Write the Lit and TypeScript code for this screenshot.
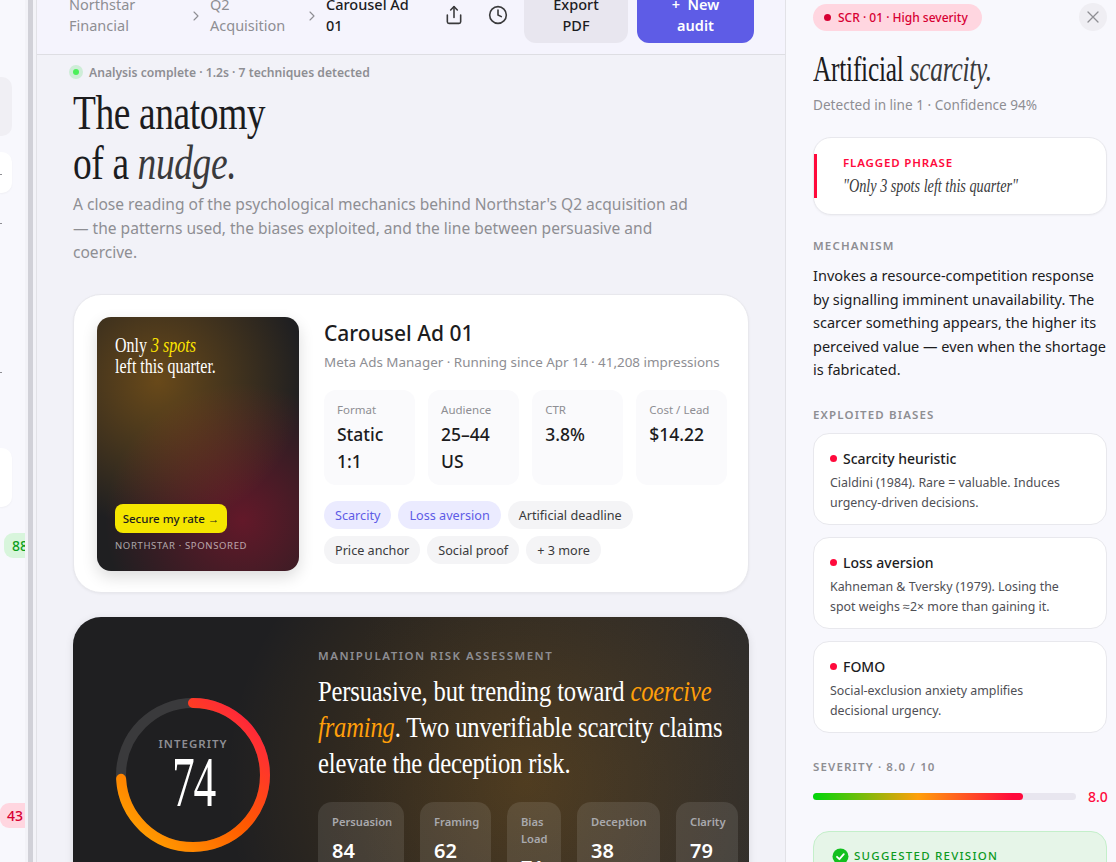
import { LitElement, html, css } from "lit";
import { customElement } from "lit/decorators.js";

const share = html`<svg class="ico" width="20" height="20" viewBox="0 0 24 24" fill="none" stroke="currentColor" stroke-width="1.9" stroke-linecap="round" stroke-linejoin="round"><path d="M4 12v8a2 2 0 0 0 2 2h12a2 2 0 0 0 2-2v-8"/><polyline points="16 6 12 2 8 6"/><line x1="12" y1="2" x2="12" y2="15"/></svg>`;
const clock = html`<svg class="ico" width="20" height="20" viewBox="0 0 24 24" fill="none" stroke="currentColor" stroke-width="1.9" stroke-linecap="round" stroke-linejoin="round"><circle cx="12" cy="12" r="10"/><polyline points="12 6 12 12 16 14"/></svg>`;

const stats = [
  ["Format", "Static 1:1"],
  ["Audience", "25–44 US"],
  ["CTR", "3.8%"],
  ["Cost / Lead", "$14.22"],
];
const scores = [
  ["Persuasion", "84"],
  ["Framing", "62"],
  ["Bias Load", "71"],
  ["Deception", "38"],
  ["Clarity", "79"],
];
const biases = [
  ["Scarcity heuristic", "Cialdini (1984). Rare = valuable. Induces urgency-driven decisions."],
  ["Loss aversion", "Kahneman & Tversky (1979). Losing the spot weighs ≈2× more than gaining it."],
  ["FOMO", "Social-exclusion anxiety amplifies decisional urgency."],
];

@customElement("app-root")
export class AppRoot extends LitElement {
  static styles = css`
    :host { display: block; width: 1116px; height: 862px; overflow: hidden; font-family: "Noto Sans", sans-serif; color: #1c1c1e; background: #f8f8fd; }
    * { box-sizing: border-box; }
    .shell { display: grid; grid-template-columns: 25px 11px 750px 330px; height: 862px; overflow: hidden; }

    .side { overflow: hidden; background: #f8f8fd; display: flex; flex-direction: column; align-items: flex-start; }
    .slab { width: 12px; height: 59px; border-radius: 0 10px 10px 0; flex: none; }
    .s1 { margin-top: 77px; background: #f0eff4; }
    .s2 { margin-top: 16px; height: 41px; background: #fff; box-shadow: 0 1px 2px rgba(0,0,0,.04); padding-top: 22px; }
    .s3 { margin-top: 75px; background: #fff; box-shadow: 0 1px 2px rgba(0,0,0,.04); }
    .mark { width: 2px; height: 1px; background: #8e8e93; flex: none; display: block; }
    .m1 { margin-top: 30px; }
    .m2 { margin-top: 148px; }
    .pill { flex: none; margin-left: 4px; width: 38px; height: 25px; border-radius: 9px; font-size: 14px; font-weight: 500; line-height: 25px; padding-left: 8px; }
    .p1 { margin-top: 26px; background: #d8f5dc; color: #0ca01c; }
    .p2 { margin-top: 245px; margin-left: 0; background: #ffd6e0; color: #d70033; padding-left: 7px; }

    .rail { background: #f3f3f8; padding-left: 3px; }
    .rail div { width: 5px; height: 100%; background: #d1d1d8; }

    .main { background: #f2f2f8; border-left: 1px solid #e2e2e7; border-right: 1px solid #e2e2e7; overflow: hidden; }
    .top { margin-top: -22px; height: 77px; padding: 11px 31px 11px 32px; display: flex; align-items: center; background: #f5f4fd; border-bottom: 1px solid #dedee3; font-size: 14.5px; line-height: 21px; }
    .crumb { color: #8e8e93; width: 123px; flex: none; margin-top: -2px; }
    .crumb.b { width: 98px; }
    .crumb.c { color: #1c1c1e; font-weight: 500; width: 95px; }
    .chev { width: 14px; color: #8e8e93; margin-right: 4px; flex: none; display: flex; }
    .ico { color: #3a3a3c; flex: none; display: block; }
    .i1 { margin-left: 23px; margin-top: -2px; }
    .i2 { margin-left: 24px; margin-top: -2px; }
    .btn { flex: none; height: 54px; border-radius: 12px; display: flex; align-items: center; justify-content: center; text-align: center; font-size: 14.5px; line-height: 21px; font-weight: 500; }
    .export { width: 104px; margin-left: 16px; background: #e8e6ef; padding: 0 30px 2px; }
    .new { width: 117px; margin-left: 9px; background: #5e5ce6; color: #fff; font-weight: 600; padding: 0 28px 2px; }

    .body { padding: 9px 36px 0; }
    .status { display: flex; align-items: center; gap: 7px; font-size: 12.15px; font-weight: 600; color: #8e8e93; height: 16px; margin-left: -5px; }
    .dot { width: 6px; height: 6px; margin: 0 3px 0 5px; border-radius: 50%; background: #4bf05a; box-shadow: 0 0 0 4px rgba(76,217,100,.22); flex: none; }
    .serif { font-family: "Liberation Serif", serif; transform-origin: left top; font-weight: 400; }
    h1 { margin: 8px 0 0; font-size: 48px; line-height: 50px; width: 800px; transform: scaleX(.78); letter-spacing: -.5px; height: 100px; }
    h1 em { color: #3a3a3c; }
    .lede { margin: 4px 0 0; font-size: 15.55px; line-height: 24px; color: #8e8e93; width: 625px; }

    .ad { margin-top: 30px; height: 299px; background: #fff; border: 1px solid #e8e8ed; border-radius: 28px; padding: 22px 22px 21px 23px; display: flex; gap: 25px; box-shadow: 0 1px 3px rgba(0,0,0,.05); }
    .creative { flex: none; width: 202px; height: 254px; border-radius: 14px; padding: 18px 18px 0; display: flex; flex-direction: column; background: radial-gradient(circle at 30% 25%, rgba(255,159,10,.33), transparent 62%), radial-gradient(circle at 72% 80%, rgba(255,10,60,.3), transparent 55%), #1f1f21; box-shadow: 0 6px 16px rgba(0,0,0,.14); color: #fff; }
    .copy { font-size: 20px; line-height: 21px; height: 42px; width: 240px; transform: scaleX(.8); flex: none; }
    .copy em { color: #ffe600; }
    .cta { margin-top: 127px; width: 112px; height: 29px; border-radius: 8px; background: #f5e600; color: #1c1c1e; font-size: 11.5px; font-weight: 500; display: flex; align-items: center; justify-content: center; flex: none; }
    .spons { margin-top: 6px; font-size: 9.5px; letter-spacing: .65px; color: rgba(255,255,255,.62); white-space: nowrap; }
    .info { flex: 1; min-width: 0; }
    .info h2 { margin: 2px 0 0; font-size: 21px; line-height: 28px; font-weight: 500; }
    .meta { margin-top: 5px; font-size: 13.43px; line-height: 20px; color: #8e8e93; white-space: nowrap; }
    .stats { margin-top: 18px; display: grid; grid-template-columns: repeat(4, 90.7px); gap: 13.4px; }
    .stat { height: 95px; border-radius: 12px; background: #fafafc; padding: 11px 13px; }
    .stat small { display: block; font-size: 11.5px; line-height: 17px; color: #8e8e93; }
    .stat b { display: block; font-size: 17.5px; line-height: 27px; font-weight: 500; margin-top: 3px; }
    .chips { margin-top: 16px; display: flex; flex-wrap: wrap; gap: 7px; width: 100%; }
    .chip { height: 28px; padding: 0 11px; border-radius: 14px; background: #f4f4f6; color: #3a3a3c; font-size: 12.65px; line-height: 28px; white-space: nowrap; }
    .chip.on { background: #ebebff; color: #5e5ce6; }

    .risk { margin-top: 24px; height: 316px; border-radius: 28px; padding: 31px 0 0 40px; display: flex; gap: 45px; color: #fff; background: radial-gradient(circle 300px at 67% 52%, rgba(255,159,10,.2), transparent), linear-gradient(100deg, #1f1f21 40%, #2b2b2d); box-shadow: 0 2px 8px rgba(0,0,0,.1); }
    .ring { flex: none; width: 160px; height: 160px; margin-top: 47px; position: relative; display: flex; flex-direction: column; align-items: center; }
    .ring svg { position: absolute; inset: 0; }
    .ring small { position: relative; margin-top: 41px; font-size: 11.5px; line-height: 16px; font-weight: 600; letter-spacing: 1px; color: #8e8e93; }
    .ring .num { position: relative; font-size: 71px; line-height: 58px; margin-top: 1px; transform: scaleX(.64); transform-origin: center top; letter-spacing: -2px; }
    .rtext { flex: none; width: 420px; }
    .eyebrow { font-size: 11.5px; line-height: 16px; font-weight: 600; letter-spacing: 1.5px; color: #8e8e93; white-space: nowrap; }
    .rh { margin-top: 9px; font-size: 30px; line-height: 36px; width: 520px; height: 108px; transform: scaleX(.82); letter-spacing: -.2px; white-space: nowrap; }
    .rh em { color: #ff9f0a; }
    .scores { margin-top: 21px; display: grid; grid-template-columns: 86px 71px 54px 83px 62px; gap: 16px; width: 420px; }
    .score { border-radius: 14px; background: rgba(255,255,255,.1); padding: 11px 0 12px 14px; }
    .score small { display: block; font-size: 11.2px; line-height: 17px; font-weight: 600; color: #a9a9ad; }
    .score b { display: block; margin-top: 7px; font-size: 20px; line-height: 27px; font-weight: 600; }
    .score:nth-child(3) small { width: 26px; }

    .panel { padding: 4px 9px 0 27px; overflow: hidden; background: #f8f8fd; }
    .phead { display: flex; justify-content: space-between; align-items: flex-start; }
    .sev { height: 27px; width: 169px; border-radius: 14px; background: #ffd6e0; color: #d70033; font-size: 12px; font-weight: 500; display: flex; align-items: center; padding-left: 11px; gap: 7px; white-space: nowrap; }
    .sev i { width: 7px; height: 7px; border-radius: 50%; background: #d70033; flex: none; }
    .close { width: 28px; height: 28px; margin-top: -1px; border-radius: 50%; background: #efeef3; display: flex; align-items: center; justify-content: center; color: #8e8e93; }
    .ptitle { margin-top: 17px; font-size: 35px; line-height: 44px; height: 44px; width: 400px; transform: scaleX(.723); letter-spacing: -.3px; white-space: nowrap; }
    .ptitle em { color: #3a3a3c; }
    .psub { margin-top: 3px; font-size: 13.6px; line-height: 20px; color: #8e8e93; white-space: nowrap; }
    .flag { margin-top: 22px; height: 78px; border-radius: 18px; background: #fff; border: 1px solid #e8e8ed; box-shadow: 0 1px 2px rgba(0,0,0,.04); position: relative; padding: 16px 0 0 29px; }
    .flag::before { content: ""; position: absolute; left: 0; top: 16px; width: 3px; height: 44px; background: #ff0a3c; }
    .flag small { display: block; font-size: 11.5px; line-height: 17px; font-weight: 600; letter-spacing: .85px; color: #ff0a3c; }
    .flag q { display: block; quotes: none; margin-top: 4px; font-size: 18px; line-height: 22px; width: 300px; transform: scaleX(.79); font-style: italic; color: #3a3a3c; white-space: nowrap; }
    .lab { font-size: 11.5px; line-height: 16px; font-weight: 600; letter-spacing: 1.15px; color: #8e8e93; white-space: nowrap; }
    .l1 { margin-top: 23px; }
    .mech { margin: 10px -3px 0 0; font-size: 14.5px; line-height: 23.5px; color: #1c1c1e; }
    .l2 { margin-top: 25px; }
    .bias { margin-top: 10px; height: 92px; border: 1px solid #e8e8ed; border-radius: 16px; background: #fff; padding: 14px 14px 0 16px; }
    .bias + .bias { margin-top: 12px; }
    .bias h3 { margin: 0; display: flex; align-items: center; gap: 6px; font-size: 14px; line-height: 21px; font-weight: 500; }
    .bias h3 i { width: 7px; height: 7px; border-radius: 50%; background: #ff0a3c; flex: none; }
    .bias p { margin: 4px 0 0; width: 250px; font-size: 12.4px; line-height: 20px; color: #4f4f55; }
    .l3 { margin-top: 26px; }
    .meter { margin-top: 11px; display: flex; align-items: center; gap: 12px; color: #ff0a3c; font-size: 14px; font-weight: 500; height: 22px; }
    .track { width: 263px; height: 7px; border-radius: 4px; background: #e8e6ef; flex: none; }
    .fill { height: 7px; border-radius: 4px; background: linear-gradient(90deg, #00d60a, #ff9f0a 50%, #ff0a3c 95%); }
    .fix { margin-top: 23px; height: 120px; border: 1px solid #c4efca; border-radius: 16px; background: #e6f5e8; padding: 15px 18px; display: flex; align-items: flex-start; gap: 5px; color: #0d9a1f; font-size: 11.5px; line-height: 18px; font-weight: 500; letter-spacing: 1.25px; white-space: nowrap; }
    .fix svg { flex: none; margin-top: 1px; }
  `;

  render() {
    return html`<div class="shell">
      <aside class="side">
        <div class="slab s1"></div>
        <div class="slab s2"><span class="mark"></span></div>
        <span class="mark m1"></span>
        <span class="mark m2"></span>
        <div class="slab s3"></div>
        <div class="pill p1">88</div>
        <div class="pill p2">43</div>
      </aside>
      <div class="rail"><div></div></div>
      <main class="main">
        <header class="top">
          <span class="crumb a">Northstar<br />Financial</span>
          <span class="chev">${this.chevron()}</span>
          <span class="crumb b">Q2<br />Acquisition</span>
          <span class="chev">${this.chevron()}</span>
          <span class="crumb c">Carousel Ad 01</span>
          <span class="i1">${share}</span>
          <span class="i2">${clock}</span>
          <div class="btn export">Export PDF</div>
          <div class="btn new">+&nbsp; New audit</div>
        </header>
        <div class="body">
          <div class="status"><span class="dot"></span>Analysis complete · 1.2s · 7 techniques detected</div>
          <h1 class="serif">The anatomy<br />of a <em>nudge.</em></h1>
          <p class="lede">A close reading of the psychological mechanics behind Northstar's Q2 acquisition ad — the patterns used, the biases exploited, and the line between persuasive and coercive.</p>

          <section class="ad">
            <div class="creative">
              <div class="copy serif">Only <em>3 spots</em><br />left this quarter.</div>
              <div class="cta">Secure my rate →</div>
              <div class="spons">NORTHSTAR · SPONSORED</div>
            </div>
            <div class="info">
              <h2>Carousel Ad 01</h2>
              <div class="meta">Meta Ads Manager · Running since Apr 14 · 41,208 impressions</div>
              <div class="stats">
                ${stats.map(([k, v]) => html`<div class="stat"><small>${k}</small><b>${v}</b></div>`)}
              </div>
              <div class="chips">
                <span class="chip on">Scarcity</span>
                <span class="chip on">Loss aversion</span>
                <span class="chip">Artificial deadline</span>
                <span class="chip">Price anchor</span>
                <span class="chip">Social proof</span>
                <span class="chip">+ 3 more</span>
              </div>
            </div>
          </section>

          <section class="risk">
            <div class="ring">
              <svg width="160" height="160" viewBox="0 0 160 160" fill="none">
                <defs>
                  <linearGradient id="rg" x1="0" y1="0" x2="1" y2="1">
                    <stop offset=".12" stop-color="#ff9a00" />
                    <stop offset=".5" stop-color="#ff5a00" />
                    <stop offset=".85" stop-color="#ff2d35" />
                    <stop offset="1" stop-color="#ff0a3c" />
                  </linearGradient>
                </defs>
                <circle cx="80" cy="80" r="72" stroke="#3a3a3c" stroke-width="10" />
                <circle cx="80" cy="80" r="72" stroke="url(#rg)" stroke-width="10" stroke-linecap="round" stroke-dasharray="334.8 452.4" transform="rotate(-90 80 80)" />
              </svg>
              <small>INTEGRITY</small>
              <div class="num serif">74</div>
            </div>
            <div class="rtext">
              <div class="eyebrow">MANIPULATION RISK ASSESSMENT</div>
              <div class="rh serif">Persuasive, but trending toward <em>coercive</em><br /><em>framing</em>. Two unverifiable scarcity claims<br />elevate the deception risk.</div>
              <div class="scores">
                ${scores.map(([k, v]) => html`<div class="score"><small>${k}</small><b>${v}</b></div>`)}
              </div>
            </div>
          </section>
        </div>
      </main>
      <aside class="panel">
        <div class="phead">
          <div class="sev"><i></i>SCR · 01 · High severity</div>
          <div class="close"><svg width="14" height="14" viewBox="0 0 14 14" fill="none" stroke="currentColor" stroke-width="1.3" stroke-linecap="round"><path d="M2 2l10 10M12 2L2 12" /></svg></div>
        </div>
        <div class="ptitle serif">Artificial <em>scarcity.</em></div>
        <div class="psub">Detected in line 1 · Confidence 94%</div>
        <div class="flag">
          <small>FLAGGED PHRASE</small>
          <q class="serif">"Only 3 spots left this quarter"</q>
        </div>
        <div class="lab l1">MECHANISM</div>
        <p class="mech">Invokes a resource-competition response by signalling imminent unavailability. The scarcer something appears, the higher its perceived value — even when the shortage is fabricated.</p>
        <div class="lab l2">EXPLOITED BIASES</div>
        ${biases.map(([t, d]) => html`<div class="bias"><h3><i></i>${t}</h3><p>${d}</p></div>`)}
        <div class="lab l3">SEVERITY · 8.0 / 10</div>
        <div class="meter"><div class="track"><div class="fill" style="width:80%"></div></div>8.0</div>
        <div class="fix">
          <svg width="17" height="17" viewBox="0 0 17 17"><circle cx="8.5" cy="8.5" r="8" fill="#12c01e" /><path d="M5 8.8l2.4 2.4 4.4-5" fill="none" stroke="#fff" stroke-width="1.8" stroke-linecap="round" stroke-linejoin="round" /></svg>
          SUGGESTED REVISION
        </div>
      </aside>
    </div>`;
  }

  private chevron() {
    return html`<svg width="8" height="12" viewBox="0 0 8 12" fill="none" stroke="currentColor" stroke-width="1.1" stroke-linecap="round" stroke-linejoin="round"><path d="M2 2l4 4-4 4" /></svg>`;
  }
}
